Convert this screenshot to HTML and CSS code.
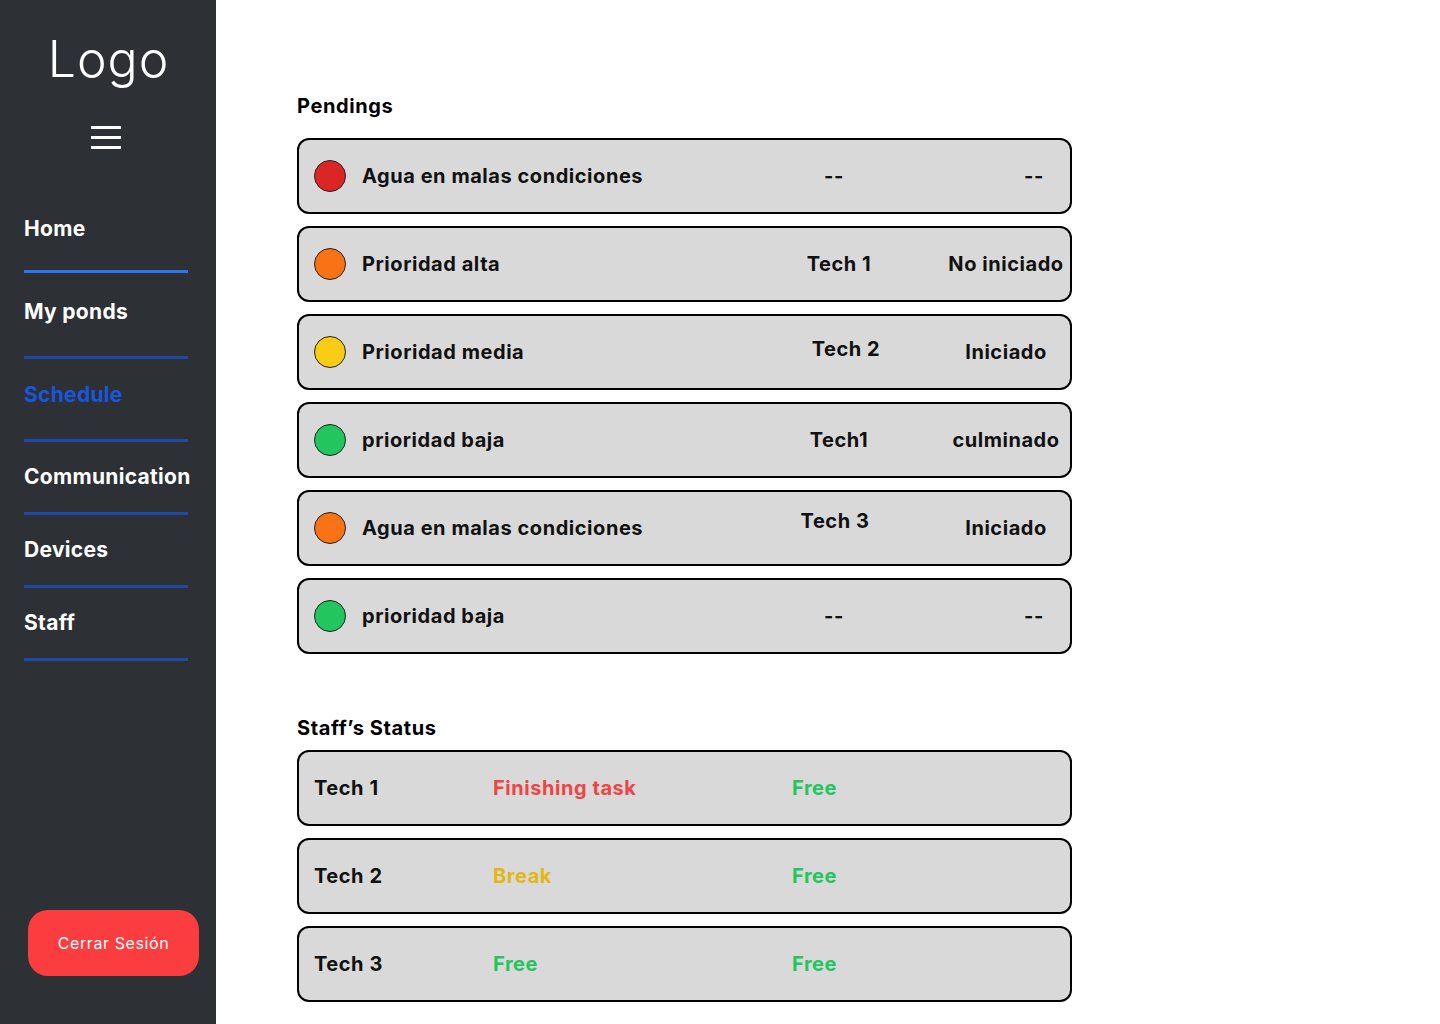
FILE: index.html
```html
<!DOCTYPE html>
<html lang="es">
<head>
<meta charset="utf-8">
<title>Schedule</title>
<link rel="stylesheet" href="styles.css">
</head>
<body>
<div class="app">
  <aside class="sidebar">
    <div class="logo">Logo</div>
    <div class="burger">
      <svg width="30" height="24" viewBox="0 0 30 24"><g stroke="#fff" stroke-width="3"><line x1="0" y1="2.5" x2="30" y2="2.5"/><line x1="0" y1="12.5" x2="30" y2="12.5"/><line x1="0" y1="22.5" x2="30" y2="22.5"/></g></svg>
    </div>
    <nav class="nav">
      <a class="nav-item home">Home</a>
      <a class="nav-item tall">My ponds</a>
      <a class="nav-item tall active">Schedule</a>
      <a class="nav-item">Communication</a>
      <a class="nav-item">Devices</a>
      <a class="nav-item">Staff</a>
    </nav>
    <button class="logout">Cerrar Sesión</button>
  </aside>
  <main class="main">
    <h2 class="section-title">Pendings</h2>
    <div class="list">
      <div class="row pend">
        <span class="dot red"></span>
        <span class="title">Agua en malas condiciones</span>
        <span class="c2 dash">--</span>
        <span class="c3 dash">--</span>
      </div>
      <div class="row pend">
        <span class="dot orange"></span>
        <span class="title">Prioridad alta</span>
        <span class="c2">Tech 1</span>
        <span class="c3">No iniciado</span>
      </div>
      <div class="row pend">
        <span class="dot yellow"></span>
        <span class="title">Prioridad media</span>
        <span class="c2 up-s">Tech 2</span>
        <span class="c3">Iniciado</span>
      </div>
      <div class="row pend">
        <span class="dot green"></span>
        <span class="title">prioridad baja</span>
        <span class="c2">Tech1</span>
        <span class="c3">culminado</span>
      </div>
      <div class="row pend">
        <span class="dot orange"></span>
        <span class="title">Agua en malas condiciones</span>
        <span class="c2 up-l">Tech 3</span>
        <span class="c3">Iniciado</span>
      </div>
      <div class="row pend">
        <span class="dot green"></span>
        <span class="title">prioridad baja</span>
        <span class="c2 dash">--</span>
        <span class="c3 dash">--</span>
      </div>
    </div>

    <h2 class="section-title staff-title">Staff’s Status</h2>
    <div class="list">
      <div class="row staff">
        <span class="name">Tech 1</span>
        <span class="status s-red">Finishing task</span>
        <span class="status s-green">Free</span>
      </div>
      <div class="row staff">
        <span class="name">Tech 2</span>
        <span class="status s-yellow">Break</span>
        <span class="status s-green">Free</span>
      </div>
      <div class="row staff">
        <span class="name">Tech 3</span>
        <span class="status s-green">Free</span>
        <span class="status s-green">Free</span>
      </div>
    </div>
  </main>
</div>
</body>
</html>
```

FILE: styles.css
```css
* { box-sizing: border-box; }
html, body { margin: 0; padding: 0; }
body {
  font-family: Inter, "Noto Sans", "Liberation Sans", sans-serif;
  background: #ffffff;
  color: #111;
}
.app {
  display: flex;
  width: 1440px;
  height: 1024px;
}
.sidebar {
  width: 216px;
  flex: none;
  background: #2d3035;
  display: flex;
  flex-direction: column;
  color: #fff;
}
.logo {
  margin-top: 35px;
  padding-left: 1px;
  text-align: center;
  font-size: 50px;
  line-height: 48px;
  font-weight: 300;
  letter-spacing: 1px;
}
.burger {
  margin-top: 42px;
  display: flex;
  justify-content: center;
  height: 24px;
}
.burger svg { display: block; margin-left: -4px; }
.nav {
  display: flex;
  flex-direction: column;
  padding: 0 28px 0 24px;
  margin-top: 68px;
}
.nav-item {
  display: block;
  font-size: 21px;
  line-height: 24px;
  font-weight: 700;
  letter-spacing: 0.3px;
  color: #fff;
  margin-top: 23px;
  padding-bottom: 23px;
  border-bottom: 3px solid #1f4aa8;
  white-space: nowrap;
}
.nav-item.home {
  margin-top: 0;
  padding-bottom: 29px;
  border-bottom-color: #2f74f0;
}
.nav-item.tall {
  padding-bottom: 32px;
}
.nav-item.home + .nav-item { margin-top: 27px; }
.nav-item.tall + .nav-item.tall { margin-top: 24px; }
.nav-item.active { color: #1a56db; }
.logout {
  margin: auto 0 48px 28px;
  width: 171px;
  height: 66px;
  border: none;
  border-radius: 20px;
  background: #fc3d3f;
  color: #fff;
  font-family: Inter, "Noto Sans", sans-serif;
  font-size: 16px;
  font-weight: 400;
  letter-spacing: 0.6px;
}

.main {
  flex: 1;
  padding: 94px 0 0 81px;
}
.section-title {
  margin: 0 0 20px 0;
  font-size: 20px;
  line-height: 24px;
  font-weight: 700;
  letter-spacing: 0.6px;
  color: #000;
}
.staff-title {
  margin-top: 62px;
  margin-bottom: 10px;
}
.list {
  display: flex;
  flex-direction: column;
  gap: 12px;
  width: 775px;
}
.row {
  height: 76px;
  border: 2px solid #000;
  border-radius: 12px;
  background: #d9d9d9;
  display: flex;
  align-items: center;
  padding-left: 15px;
  font-size: 20px;
  line-height: 24px;
  font-weight: 700;
  letter-spacing: 0.55px;
  color: #111;
}
.dot {
  width: 32px;
  height: 32px;
  border-radius: 50%;
  border: 1px solid #222;
  flex: none;
  margin-right: 16px;
}
.dot.red { background: #dc2626; }
.dot.orange { background: #f97316; }
.dot.yellow { background: #facc15; }
.dot.green { background: #22c55e; }
.title { flex: 1; white-space: nowrap; }
.c2 {
  width: 100px;
  flex: none;
  text-align: center;
  margin-right: 53px;
  white-space: nowrap;
}
.c3 {
  width: 128px;
  flex: none;
  text-align: center;
  white-space: nowrap;
}
.c2.dash { padding-right: 10px; }
.c3.dash { padding-left: 56px; }
.c2.up-s { margin-bottom: 6px; padding-left: 14px; }
.c2.up-l { margin-bottom: 14px; padding-right: 8px; }
.name { width: 179px; flex: none; }
.status { width: 299px; flex: none; }
.s-red { color: #ef4444; }
.s-yellow { color: #e2b714; }
.s-green { color: #22c55e; }
```
